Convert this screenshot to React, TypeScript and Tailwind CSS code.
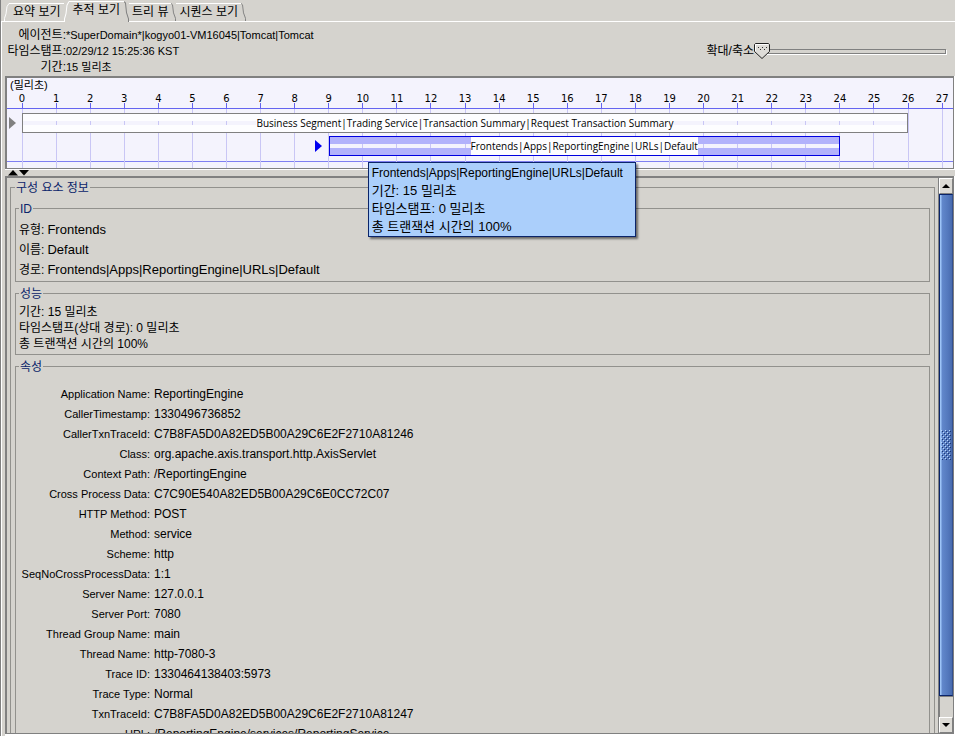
import type { ReactNode } from "react"

const tabs = ["요약 보기", "추적 보기", "트리 뷰", "시퀀스 보기"]
const activeTab = 1

const summary = [
  ["에이전트:", "*SuperDomain*|kogyo01-VM16045|Tomcat|Tomcat"],
  ["타임스탬프:", "02/29/12 15:25:36 KST"],
  ["기간:", "15 밀리초"],
]

const ticks = Array.from({ length: 28 }, (_, i) => i)

const identity = [
  ["유형:", "Frontends"],
  ["이름:", "Default"],
  ["경로:", "Frontends|Apps|ReportingEngine|URLs|Default"],
]

const performance = ["기간: 15 밀리초", "타임스탬프(상대 경로): 0 밀리초", "총 트랜잭션 시간의 100%"]

const properties = [
  ["Application Name:", "ReportingEngine"],
  ["CallerTimestamp:", "1330496736852"],
  ["CallerTxnTraceId:", "C7B8FA5D0A82ED5B00A29C6E2F2710A81246"],
  ["Class:", "org.apache.axis.transport.http.AxisServlet"],
  ["Context Path:", "/ReportingEngine"],
  ["Cross Process Data:", "C7C90E540A82ED5B00A29C6E0CC72C07"],
  ["HTTP Method:", "POST"],
  ["Method:", "service"],
  ["Scheme:", "http"],
  ["SeqNoCrossProcessData:", "1:1"],
  ["Server Name:", "127.0.0.1"],
  ["Server Port:", "7080"],
  ["Thread Group Name:", "main"],
  ["Thread Name:", "http-7080-3"],
  ["Trace ID:", "1330464138403:5973"],
  ["Trace Type:", "Normal"],
  ["TxnTraceId:", "C7B8FA5D0A82ED5B00A29C6E2F2710A81247"],
  ["URL:", "/ReportingEngine/services/ReportingService"],
]

function TabBar() {
  return (
    <div role="tablist" className="flex h-[22px] items-end">
      <div className="w-[3px] self-stretch border-b border-white" />
      {tabs.map((label, i) => {
        const active = i === activeTab
        return (
          <button
            key={label}
            role="tab"
            aria-selected={active}
            className={`flex ${active ? "h-[21px]" : "h-[19px] border-b border-white"}`}
          >
            {i <= activeTab && (
              <svg className="h-full w-[5px]" viewBox="0 0 5 20" preserveAspectRatio="none" fill="none">
                <path d="M0.5 20V17L2 12L3 4L5 0.5" stroke="#fff" />
              </svg>
            )}
            <span
              className={`h-full border-t border-white leading-4 ${active ? "px-1" : i === 0 ? "pl-1 pr-[3px]" : "px-[3px]"}`}
            >
              {label}
            </span>
            {i >= activeTab && (
              <svg className="h-full w-[5px]" viewBox="0 0 5 20" preserveAspectRatio="none" fill="none">
                <path d="M0 0.5L1.5 2L2.5 11L4.5 17V20" stroke="#808080" />
              </svg>
            )}
          </button>
        )
      })}
      <div className="flex-1 self-stretch border-b border-white" />
    </div>
  )
}

function Header() {
  return (
    <div className="flex items-center justify-between pb-px pt-[5px]">
      <dl className="grid grid-cols-[60px_auto] leading-4">
        {summary.map(([label, value]) => (
          <div key={label} className="contents">
            <dt className="whitespace-nowrap text-right">{label}</dt>
            <dd className="text-[11px] leading-4">{value}</dd>
          </div>
        ))}
      </dl>
      <div className="flex items-center pr-[9px]">
        <label htmlFor="zoom">확대/축소</label>
        <div className="relative flex w-48 items-center">
          <input
            id="zoom"
            type="range"
            defaultValue={0}
            className="ml-1 h-[5px] flex-1 appearance-none border border-[#808080] bg-[#d5d3ce] shadow-[1px_1px_0_#fff] [&::-webkit-slider-thumb]:h-4 [&::-webkit-slider-thumb]:w-4 [&::-webkit-slider-thumb]:opacity-0"
          />
          <svg className="pointer-events-none absolute left-0 h-4 w-4" viewBox="0 0 16 16" fill="none">
            <path d="M1.5 0.5H14.5L15.5 1.5V8.5L8 15.5L0.5 8.5V1.5Z" fill="#dedcd8" stroke="#222" />
            <path d="M1.5 8V1.5H14" stroke="#fff" />
            <path d="M4 4.5H13" stroke="#333" strokeDasharray="1 3" />
            <path d="M6 6.5H12" stroke="#333" strokeDasharray="1 3" />
          </svg>
        </div>
      </div>
    </div>
  )
}

function Arrow({ className }: { className: string }) {
  return (
    <svg className={`h-3 w-[7px] self-center ${className}`} viewBox="0 0 7 12" fill="currentColor">
      <path d="M0 0L7 6L0 12Z" />
    </svg>
  )
}

function BarLabel({ children }: { children: ReactNode }) {
  return (
    <span className="h-full whitespace-nowrap bg-[#fdfdff] font-['Open_Sans',sans-serif] text-[10px] leading-[18px]">
      {children}
    </span>
  )
}

function Timeline() {
  return (
    <section className="relative z-10 border-b border-r border-white">
      <div className="border-b border-l-2 border-r border-t-2 border-[#808080] bg-[#f4f3fd]">
        <p className="h-[13px] pl-[3px] text-[11px] leading-[14px]">(밀리초)</p>
        <div className="relative">
          <div className="absolute inset-0 overflow-hidden">
            <div className="-ml-0.5 -mr-1.5 flex h-full">
              {ticks.map((t) => (
                <div key={t} className="flex flex-1 justify-center pt-[18px]">
                  <div className="w-px bg-[#c9c6f5]" />
                </div>
              ))}
            </div>
          </div>
          <div className="relative overflow-hidden border-b border-[#6464f0]">
            <div className="-ml-0.5 -mr-1.5 flex font-['DejaVu_Sans',sans-serif] text-[10px]">
              {ticks.map((t) => (
                <div key={t} className="flex flex-1 flex-col items-center">
                  <span className="h-3 leading-4">{t}</span>
                  <span className="h-[5px] w-px bg-[#6464f0]" />
                </div>
              ))}
            </div>
          </div>
          <div className="relative -ml-0.5 -mr-1.5 grid grid-cols-[repeat(56,minmax(0,1fr))] gap-y-[3px] pb-[5px] pt-1">
            <Arrow className="ml-1 text-[#808080]" />
            <div className="col-start-2 col-end-54 flex h-5 justify-center border border-[#808080] bg-[linear-gradient(#fdfdff_7px,transparent_7px,transparent_11px,#fdfdff_11px)]">
              <BarLabel>Business Segment|Trading Service|Transaction Summary|Request Transaction Summary</BarLabel>
            </div>
            <Arrow className="col-start-[19] ml-[3px] text-[#0000f0]" />
            <div className="relative col-start-[20] col-end-[50] flex h-5 justify-center border border-[#0000e0] bg-[linear-gradient(#b2b2fb_7px,transparent_7px,transparent_11px,#b2b2fb_11px)]">
              <BarLabel>Frontends|Apps|ReportingEngine|URLs|Default</BarLabel>
              <div
                role="tooltip"
                className="absolute left-[38px] top-[25px] whitespace-nowrap border border-[#0a246a] bg-[#abcffb] pl-[3px] pr-3 pt-px text-[13px] leading-[18px] shadow-[2px_2px_2px_rgba(0,0,0,0.5)]"
              >
                <p className="text-[12px] leading-[18px]">Frontends|Apps|ReportingEngine|URLs|Default</p>
                <p>기간: 15 밀리초</p>
                <p>타임스탬프: 0 밀리초</p>
                <p>총 트랜잭션 시간의 100%</p>
              </div>
            </div>
          </div>
          <div className="h-[7px] border-t border-[#7f7ff2]" />
        </div>
      </div>
    </section>
  )
}

function Splitter() {
  return (
    <div className="flex h-1.5 items-center gap-px pl-[3px]">
      <button aria-label="위로" className="h-1.5 w-2.5">
        <svg className="h-1.5 w-2.5" viewBox="0 0 10 6">
          <path d="M5 0L10 5.5H0Z" />
        </svg>
      </button>
      <button aria-label="아래로" className="h-1.5 w-2.5">
        <svg className="h-1.5 w-2.5" viewBox="0 0 10 6">
          <path d="M0 0H10L5 5.5Z" />
        </svg>
      </button>
    </div>
  )
}

function Group({ title, className, children }: { title: string; className: string; children: ReactNode }) {
  return (
    <fieldset className={`min-w-0 border border-[#92918d] ${className}`}>
      <legend className="px-px pt-0.5 leading-4 text-[#0a246a]">{title}</legend>
      {children}
    </fieldset>
  )
}

function ScrollBar() {
  const button =
    "flex h-4 items-center justify-center border border-b-[#808080] border-r-[#808080] border-l-white border-t-white bg-[#dddbd6]"
  return (
    <div className="flex w-[15px] flex-col border-l border-[#808080]">
      <button aria-label="위로 스크롤" className={button}>
        <svg className="h-1 w-2" viewBox="0 0 8 4">
          <path d="M4 0L8 4H0Z" />
        </svg>
      </button>
      <div className="flex flex-[503] items-center justify-center border border-b-[#0a246a] border-l-[#0a246a] border-r-[#33508f] border-t-[#0a246a] bg-[linear-gradient(90deg,#9dc4f7_1px,#6288cc_2px,#5378bd_8px,#4567aa_13px)]">
        <svg className="h-[30px] w-2.5" viewBox="0 0 10 30">
          <defs>
            <pattern id="grip" width="4" height="4" patternUnits="userSpaceOnUse">
              <path d="M0 0H1V1H0ZM2 2H3V3H2Z" fill="#b9d6fa" />
              <path d="M1 1H2V2H1ZM3 3H4V4H3Z" fill="#1c3674" />
            </pattern>
          </defs>
          <rect width="10" height="30" fill="url(#grip)" />
        </svg>
      </div>
      <div className="flex-[20] border-l border-t border-[#808080]" />
      <button aria-label="아래로 스크롤" className={button}>
        <svg className="h-1 w-2" viewBox="0 0 8 4">
          <path d="M0 0H8L4 4Z" />
        </svg>
      </button>
    </div>
  )
}

function Details() {
  return (
    <section className="flex min-h-0 flex-1 border-b-2 border-r border-white">
      <div className="flex min-h-0 flex-1 border-b border-l-2 border-r border-t-2 border-[#808080]">
        <div className="min-w-0 flex-1 overflow-hidden px-[3px]">
          <Group title="구성 요소 정보" className="px-1">
            <Group title="ID" className="mt-[3px] px-[3px] pb-px pt-[3px]">
              <dl className="grid grid-cols-[auto_1fr] gap-x-[3px] leading-5">
                {identity.map(([label, value]) => (
                  <div key={label} className="contents">
                    <dt>{label}</dt>
                    <dd className="text-[13px] leading-5">{value}</dd>
                  </div>
                ))}
              </dl>
            </Group>
            <Group title="성능" className="mt-0.5 px-[3px] pb-0.5 pt-0.5">
              {performance.map((line) => (
                <p key={line} className="leading-4">
                  {line}
                </p>
              ))}
            </Group>
            <Group title="속성" className="mt-0.5 px-[3px] pb-4 pt-[9px]">
              <table>
                <tbody>
                  {properties.map(([label, value]) => (
                    <tr key={label} className="h-5">
                      <th scope="row" className="w-[131px] p-0 text-right text-[11px] font-normal leading-5">
                        {label}
                      </th>
                      <td className="p-0 pl-1 leading-5">{value}</td>
                    </tr>
                  ))}
                </tbody>
              </table>
            </Group>
          </Group>
        </div>
        <ScrollBar />
      </div>
    </section>
  )
}

export default function App() {
  return (
    <main className="flex h-screen flex-col overflow-hidden border-l border-[#808080] bg-[#d5d3ce] font-['Liberation_Sans','Noto_Sans_CJK_KR',sans-serif] text-[12px] text-black">
      <TabBar />
      <div className="flex min-h-0 flex-1 flex-col border-l border-white">
        <div className="pl-1">
          <Header />
        </div>
        <div className="flex min-h-0 flex-1 flex-col pl-[3px]">
          <Timeline />
          <Splitter />
          <Details />
        </div>
      </div>
    </main>
  )
}
